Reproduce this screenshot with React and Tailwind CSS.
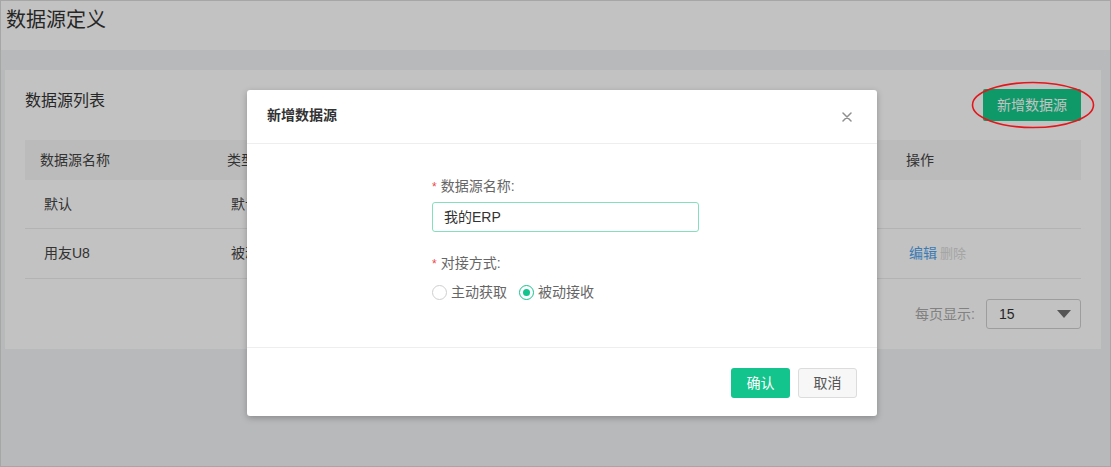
import React from "react";

const FONT = { fontFamily: '"Liberation Sans", "Noto Sans CJK SC", "Noto Sans", sans-serif' };

function Radio({ checked, label }) {
  return (
    <label className="flex items-center gap-[4px]">
      <span
        className={
          "flex h-[15px] w-[15px] items-center justify-center rounded-full border bg-white " +
          (checked ? "border-[#13c48c]" : "border-[#cfcfcf]")
        }
      >
        {checked && <span className="h-[7px] w-[7px] rounded-full bg-[#13c48c]" />}
      </span>
      <span className="text-[14px] leading-[20px] text-[#666]">{label}</span>
    </label>
  );
}

export default function App() {
  return (
    <div
      style={FONT}
      className="relative h-[467px] w-[1111px] overflow-hidden border border-[#a6a6a6] bg-[#f2f3f6]"
    >
      {/* page header */}
      <div className="h-[49px] bg-white pl-[5px] pt-[5px] text-[20px] leading-[28px] text-[#333]">
        数据源定义
      </div>

      {/* content band */}
      <div className="pt-[20px]">
        <div className="ml-[4px] w-[1096px] bg-white">
          <div className="flex items-start justify-between px-[20px] pt-[19px]">
            <div className="text-[16px] leading-[24px] text-[#333]">数据源列表</div>
            <button className="h-[32px] w-[98px] rounded-[2px] bg-[#14c98b] text-[14px] text-white">
              新增数据源
            </button>
          </div>

          <div className="mx-[20px] mt-[19px] text-[14px] text-[#444]">
            <div className="flex h-[40px] items-center bg-[#f6f6f6]">
              <div className="w-[187px] pl-[15px]">数据源名称</div>
              <div className="w-[300px] pl-[15px]">类型</div>
              <div className="flex-1 pl-[15px]">描述</div>
              <div className="w-[190px] pl-[15px]">操作</div>
            </div>
            <div className="flex h-[49px] items-center border-b border-[#ececec]">
              <div className="w-[187px] pl-[19px]">默认</div>
              <div className="w-[300px] pl-[19px]">默认</div>
              <div className="flex-1 pl-[19px]"></div>
              <div className="w-[190px] pl-[18px]"></div>
            </div>
            <div className="flex h-[50px] items-center border-b border-[#ececec]">
              <div className="w-[187px] pl-[19px]">用友U8</div>
              <div className="w-[300px] pl-[19px]">被动接收</div>
              <div className="flex-1 pl-[19px]"></div>
              <div className="w-[190px] pl-[18px]">
                <span className="text-[#4fa3ee]">编辑</span>
                <span className="ml-[3px] text-[13px] text-[#d9d9d9]">删除</span>
              </div>
            </div>
          </div>

          <div className="flex items-center justify-end px-[20px] py-[20px]">
            <span className="mr-[11px] text-[14px] text-[#aaa]">每页显示:</span>
            <div className="flex h-[30px] w-[95px] items-center justify-between rounded-[3px] border border-[#cfcfcf] pl-[12px] pr-[9px] text-[14px] text-[#333]">
              <span>15</span>
              <svg width="14" height="10" viewBox="0 0 14 10">
                <polygon points="0,1 14,1 7,9" fill="#707070" />
              </svg>
            </div>
          </div>
        </div>
      </div>

      {/* mask */}
      <div className="absolute inset-0 bg-[rgba(0,0,0,0.24)]" />

      {/* annotation ellipse */}
      <svg className="absolute left-[969px] top-[79px]" width="126" height="50" viewBox="0 0 126 50">
        <ellipse cx="63" cy="25" rx="60.5" ry="22.5" fill="none" stroke="#e3171b" strokeWidth="1.6" />
      </svg>

      {/* modal */}
      <div className="absolute left-[246px] top-[89px] w-[630px] rounded-[3px] bg-white shadow-[0_2px_6px_rgba(0,0,0,0.25)]">
        <div className="flex h-[54px] items-center justify-between border-b border-[#eeeeee] pl-[20px] pr-[25px]">
          <span className="-mt-[3px] text-[14px] font-bold text-[#333]">新增数据源</span>
          <svg width="10" height="10" viewBox="0 0 10 10">
            <path d="M1 1 L9 9 M9 1 L1 9" stroke="#8f8f8f" strokeWidth="1.5" strokeLinecap="round" />
          </svg>
        </div>

        <div className="flex h-[204px] justify-center border-b border-[#eeeeee] pl-[7px] pt-[32px]">
          <div className="w-[267px]">
            <div className="text-[14px] leading-[20px] text-[#666]">
              <span className="mr-[4px] text-[12px] text-[#f04848]">*</span>数据源名称:
            </div>
            <div className="mt-[5px] flex h-[30px] items-center rounded-[3px] border border-[#85dfbf] pl-[11px] text-[14px] text-[#333]">
              我的ERP
            </div>
            <div className="mt-[21px] text-[14px] leading-[20px] text-[#666]">
              <span className="mr-[4px] text-[12px] text-[#f04848]">*</span>对接方式:
            </div>
            <div className="mt-[8px] flex items-center gap-[12px]">
              <Radio label="主动获取" />
              <Radio checked label="被动接收" />
            </div>
          </div>
        </div>

        <div className="flex justify-end gap-[8px] pb-[18px] pr-[20px] pt-[20px]">
          <button className="h-[30px] w-[59px] rounded-[3px] bg-[#13c48c] text-[14px] text-white">确认</button>
          <button className="h-[30px] w-[59px] rounded-[3px] border border-[#dcdcdc] bg-[#f7f7f7] text-[14px] text-[#555]">
            取消
          </button>
        </div>
      </div>
    </div>
  );
}
